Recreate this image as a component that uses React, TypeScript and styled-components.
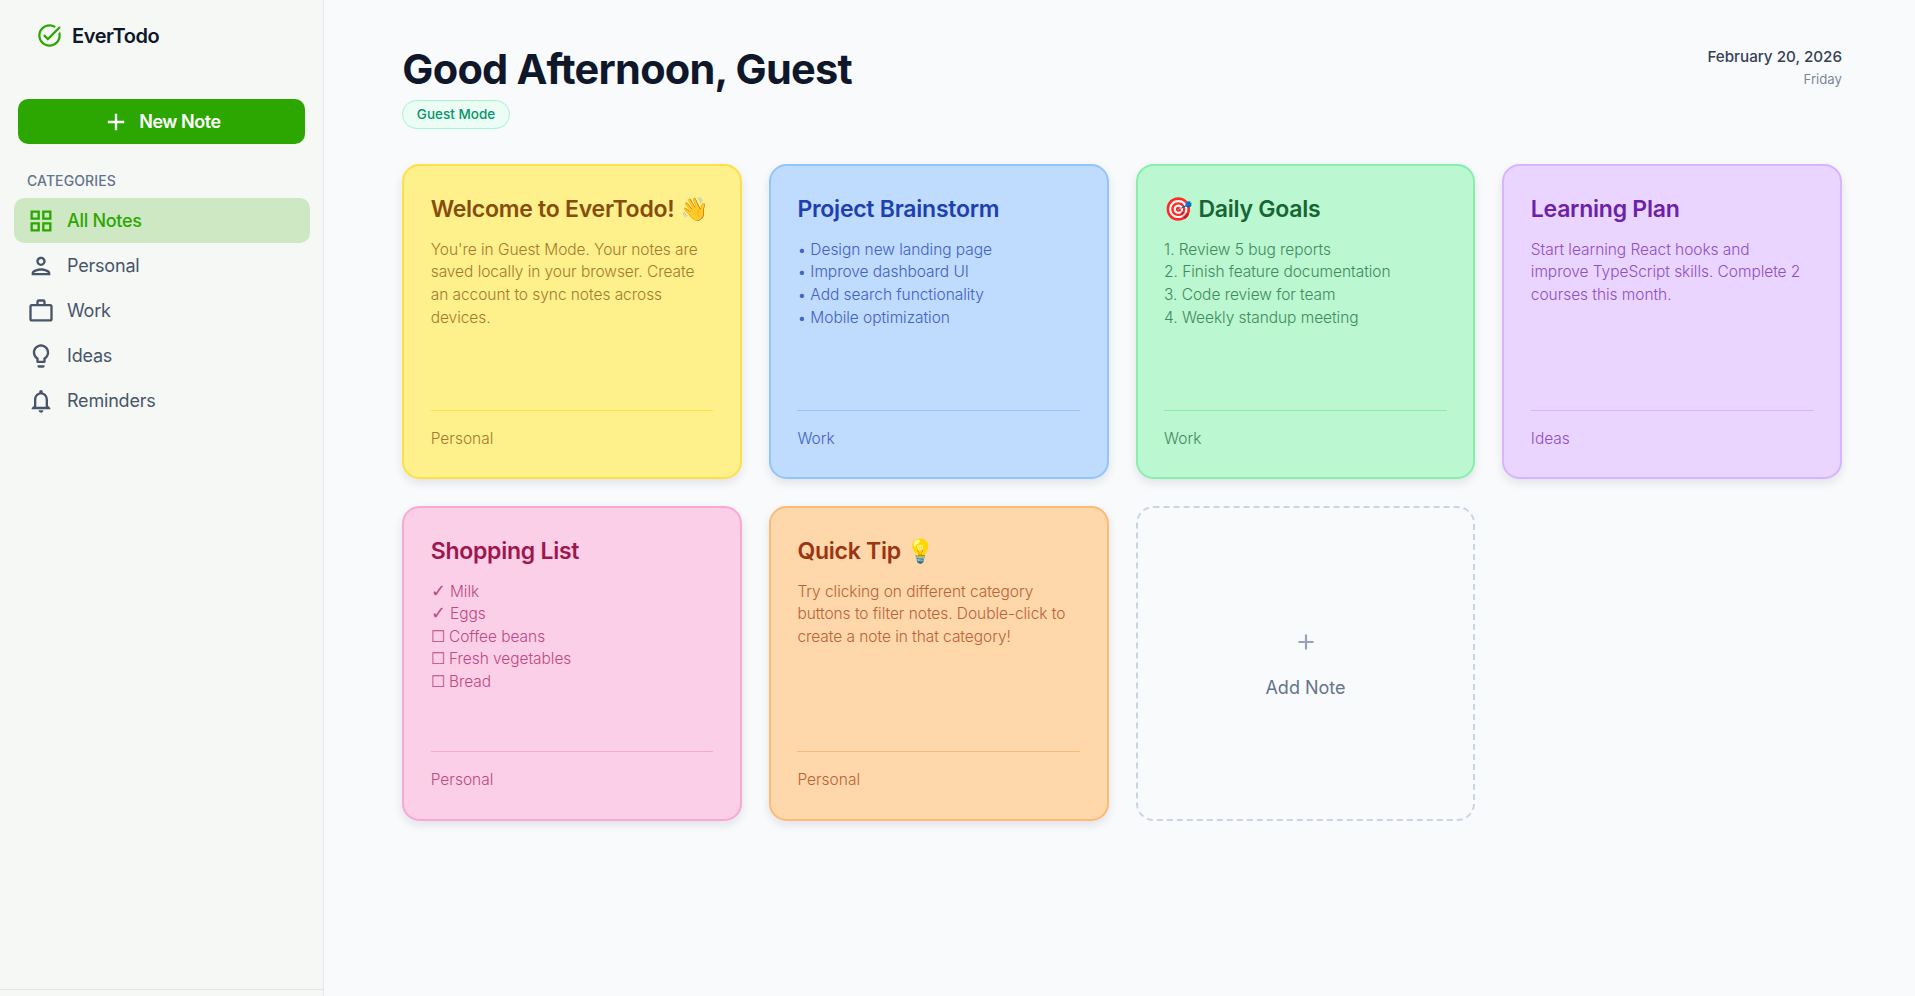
import React from 'react';
import styled, { createGlobalStyle } from 'styled-components';
import {
    MdAdd,
    MdOutlineGridView,
    MdOutlineLightbulb,
    MdOutlineNotifications,
    MdOutlinePerson,
    MdOutlineTaskAlt,
    MdOutlineWorkOutline,
} from 'react-icons/md';

const GlobalStyle = createGlobalStyle`
    html, body {
        margin: 0;
        height: 100%;
        overflow: hidden;
    }
    body {
        background: #f9fafc;
        font-family: 'Inter', 'Noto Sans', sans-serif;
    }
    * {
        box-sizing: border-box;
    }
`;

const Page = styled.div`
    display: flex;
    height: 996px;
`;

const Sidebar = styled.aside`
    width: 324px;
    flex-shrink: 0;
    display: flex;
    flex-direction: column;
    background: #f6f8f5;
    border-right: 1px solid #e5e7eb;
`;

const Brand = styled.div`
    display: flex;
    align-items: flex-start;
    padding: 22px 0 0 36px;
    height: 99px;
    font-size: 20px;
    font-weight: 600;
    color: #0f172a;
    letter-spacing: -0.4px;

    svg {
        color: #2ca702;
    }
`;

const BrandRow = styled.div`
    display: flex;
    align-items: center;
    gap: 9px;
`;

const NewNote = styled.button`
    display: flex;
    align-items: center;
    justify-content: center;
    gap: 9px;
    height: 45px;
    margin: 0 18px;
    border: 0;
    border-radius: 10px;
    background: #2ca702;
    color: #fff;
    font: 600 18px 'Inter', sans-serif;
    letter-spacing: -0.45px;
`;

const SectionLabel = styled.div`
    margin: 28px 0 0 27px;
    height: 24px;
    font-size: 14px;
    font-weight: 500;
    letter-spacing: 0.1px;
    color: #64748b;
    line-height: 17px;
`;

const Nav = styled.nav`
    display: flex;
    flex-direction: column;
    padding: 0 13px 0 14px;
    margin-top: 2px;
`;

const NavItem = styled.div<{ $active?: boolean }>`
    display: flex;
    align-items: center;
    gap: 12px;
    height: 45px;
    padding-left: 13px;
    border-radius: 10px;
    font-size: 18px;
    letter-spacing: ${(p) => (p.$active ? '-0.3px' : '-0.2px')};
    background: ${(p) => (p.$active ? '#cfe8c4' : 'transparent')};
    color: ${(p) => (p.$active ? '#2ca702' : '#475569')};
    font-weight: ${(p) => (p.$active ? 500 : 400)};
`;

const SideFoot = styled.div`
    margin-top: auto;
    height: 7px;
    border-top: 1px solid #e2e4ea;
`;

const Main = styled.main`
    flex: 1;
    padding: 44px 73px 0 78.3px;
`;

const Header = styled.header`
    display: flex;
    justify-content: space-between;
    height: 120.4px;
`;

const Greeting = styled.h1`
    margin: 0;
    font-size: 41.5px;
    line-height: 50px;
    font-weight: 700;
    color: #0f172a;
    letter-spacing: -0.75px;
`;

const GuestBadge = styled.span`
    display: inline-block;
    margin-top: 6px;
    padding: 0 13.5px;
    height: 29px;
    line-height: 27px;
    border: 1px solid #a7f3d0;
    border-radius: 15px;
    background: #ecfdf5;
    color: #059669;
    font-size: 13.5px;
    font-weight: 500;
`;

const DateBox = styled.div`
    text-align: right;
    padding-top: 3px;
`;

const DateLine = styled.div`
    font-size: 15.2px;
    line-height: 20px;
    font-weight: 500;
    color: #334155;
`;

const DayLine = styled.div`
    margin-top: 3px;
    font-size: 13.2px;
    line-height: 18px;
    font-weight: 400;
    color: #7b8798;
`;

const Grid = styled.div`
    display: grid;
    grid-template-columns: repeat(4, 1fr);
    grid-auto-rows: 314.6px;
    gap: 27.17px;
`;

type Tone = { bg: string; edge: string; title: string; body: string };

const Card = styled.article<{ $tone: Tone }>`
    display: flex;
    flex-direction: column;
    padding: 27px 26.4px 0;
    border: 2.2px solid ${(p) => p.$tone.edge};
    border-radius: 17.6px;
    background: ${(p) => p.$tone.bg};
    box-shadow: 0 4px 10px rgba(15, 23, 42, 0.1);
`;

const CardTitle = styled.h3<{ $tone: Tone }>`
    margin: 0;
    height: 32px;
    font-size: 23px;
    line-height: 32px;
    font-weight: 600;
    letter-spacing: -0.25px;
    color: ${(p) => p.$tone.title};
`;

const CardBody = styled.div<{ $tone: Tone }>`
    flex: 1;
    margin-top: 13.5px;
    font-size: 15.5px;
    font-weight: 300;
    line-height: 22.6px;
    letter-spacing: -0.05px;
    color: ${(p) => p.$tone.body};
    white-space: pre-line;
`;

const Tick = styled.span`
    font-family: 'DejaVu Sans', sans-serif;
    font-size: 18px;
    line-height: 1;
`;

const CardFoot = styled.div<{ $tone: Tone }>`
    height: 67.4px;
    padding-top: 17px;
    border-top: 1px solid ${(p) => p.$tone.edge};
    font-size: 15.5px;
    font-weight: 300;
    line-height: 22px;
    color: ${(p) => p.$tone.body};
`;

const AddCard = styled.div`
    display: flex;
    flex-direction: column;
    align-items: center;
    justify-content: center;
    gap: 22px;
    border: 2.2px dashed #cbd5e1;
    border-radius: 17.6px;
    color: #94a3b8;
`;

const AddLabel = styled.span`
    font-size: 18px;
    color: #64748b;
`;

const tones: Record<string, Tone> = {
    yellow: { bg: '#fef08a', edge: '#fde047', title: '#854d0e', body: '#a67a2e' },
    blue: { bg: '#bfdbfe', edge: '#93c5fd', title: '#1e40af', body: '#4262c4' },
    green: { bg: '#bbf7d0', edge: '#86efac', title: '#166534', body: '#3f8b5f' },
    purple: { bg: '#e9d5ff', edge: '#d8b4fe', title: '#6b21a8', body: '#8f4fc6' },
    pink: { bg: '#fbcfe8', edge: '#f9a8d4', title: '#9d174d', body: '#bd4a80' },
    orange: { bg: '#fed7aa', edge: '#fdba74', title: '#9a3412', body: '#bb6238' },
};

const notes: { tone: string; title: string; body: React.ReactNode; category: string }[] = [
    {
        tone: 'yellow',
        title: 'Welcome to EverTodo! 👋',
        body: "You're in Guest Mode. Your notes are saved locally in your browser. Create an account to sync notes across devices.",
        category: 'Personal',
    },
    {
        tone: 'blue',
        title: 'Project Brainstorm',
        body: '• Design new landing page\n• Improve dashboard UI\n• Add search functionality\n• Mobile optimization',
        category: 'Work',
    },
    {
        tone: 'green',
        title: '🎯 Daily Goals',
        body: '1. Review 5 bug reports\n2. Finish feature documentation\n3. Code review for team\n4. Weekly standup meeting',
        category: 'Work',
    },
    {
        tone: 'purple',
        title: 'Learning Plan',
        body: 'Start learning React hooks and\nimprove TypeScript skills. Complete 2\ncourses this month.',
        category: 'Ideas',
    },
    {
        tone: 'pink',
        title: 'Shopping List',
        body: (
            <>
                <Tick>✓</Tick> Milk{'\n'}
                <Tick>✓</Tick> Eggs{'\n'}☐ Coffee beans{'\n'}☐ Fresh vegetables{'\n'}☐ Bread
            </>
        ),
        category: 'Personal',
    },
    {
        tone: 'orange',
        title: 'Quick Tip 💡',
        body: 'Try clicking on different category buttons to filter notes. Double-click to create a note in that category!',
        category: 'Personal',
    },
];

const navItems = [
    { label: 'All Notes', icon: MdOutlineGridView, active: true },
    { label: 'Personal', icon: MdOutlinePerson },
    { label: 'Work', icon: MdOutlineWorkOutline },
    { label: 'Ideas', icon: MdOutlineLightbulb },
    { label: 'Reminders', icon: MdOutlineNotifications },
];

const App: React.FC = () => (
    <Page>
        <GlobalStyle />
        <Sidebar>
            <Brand>
                <BrandRow>
                    <MdOutlineTaskAlt size={27} />
                    EverTodo
                </BrandRow>
            </Brand>
            <NewNote>
                <MdAdd size={28} />
                New Note
            </NewNote>
            <SectionLabel>CATEGORIES</SectionLabel>
            <Nav>
                {navItems.map((item) => (
                    <NavItem key={item.label} $active={item.active}>
                        <item.icon size={28} />
                        {item.label}
                    </NavItem>
                ))}
            </Nav>
            <SideFoot />
        </Sidebar>
        <Main>
            <Header>
                <div>
                    <Greeting>Good Afternoon, Guest</Greeting>
                    <GuestBadge>Guest Mode</GuestBadge>
                </div>
                <DateBox>
                    <DateLine>February 20, 2026</DateLine>
                    <DayLine>Friday</DayLine>
                </DateBox>
            </Header>
            <Grid>
                {notes.map((note) => (
                    <Card key={note.title} $tone={tones[note.tone]}>
                        <CardTitle $tone={tones[note.tone]}>{note.title}</CardTitle>
                        <CardBody $tone={tones[note.tone]}>{note.body}</CardBody>
                        <CardFoot $tone={tones[note.tone]}>{note.category}</CardFoot>
                    </Card>
                ))}
                <AddCard>
                    <MdAdd size={26} />
                    <AddLabel>Add Note</AddLabel>
                </AddCard>
            </Grid>
        </Main>
    </Page>
);

export default App;
